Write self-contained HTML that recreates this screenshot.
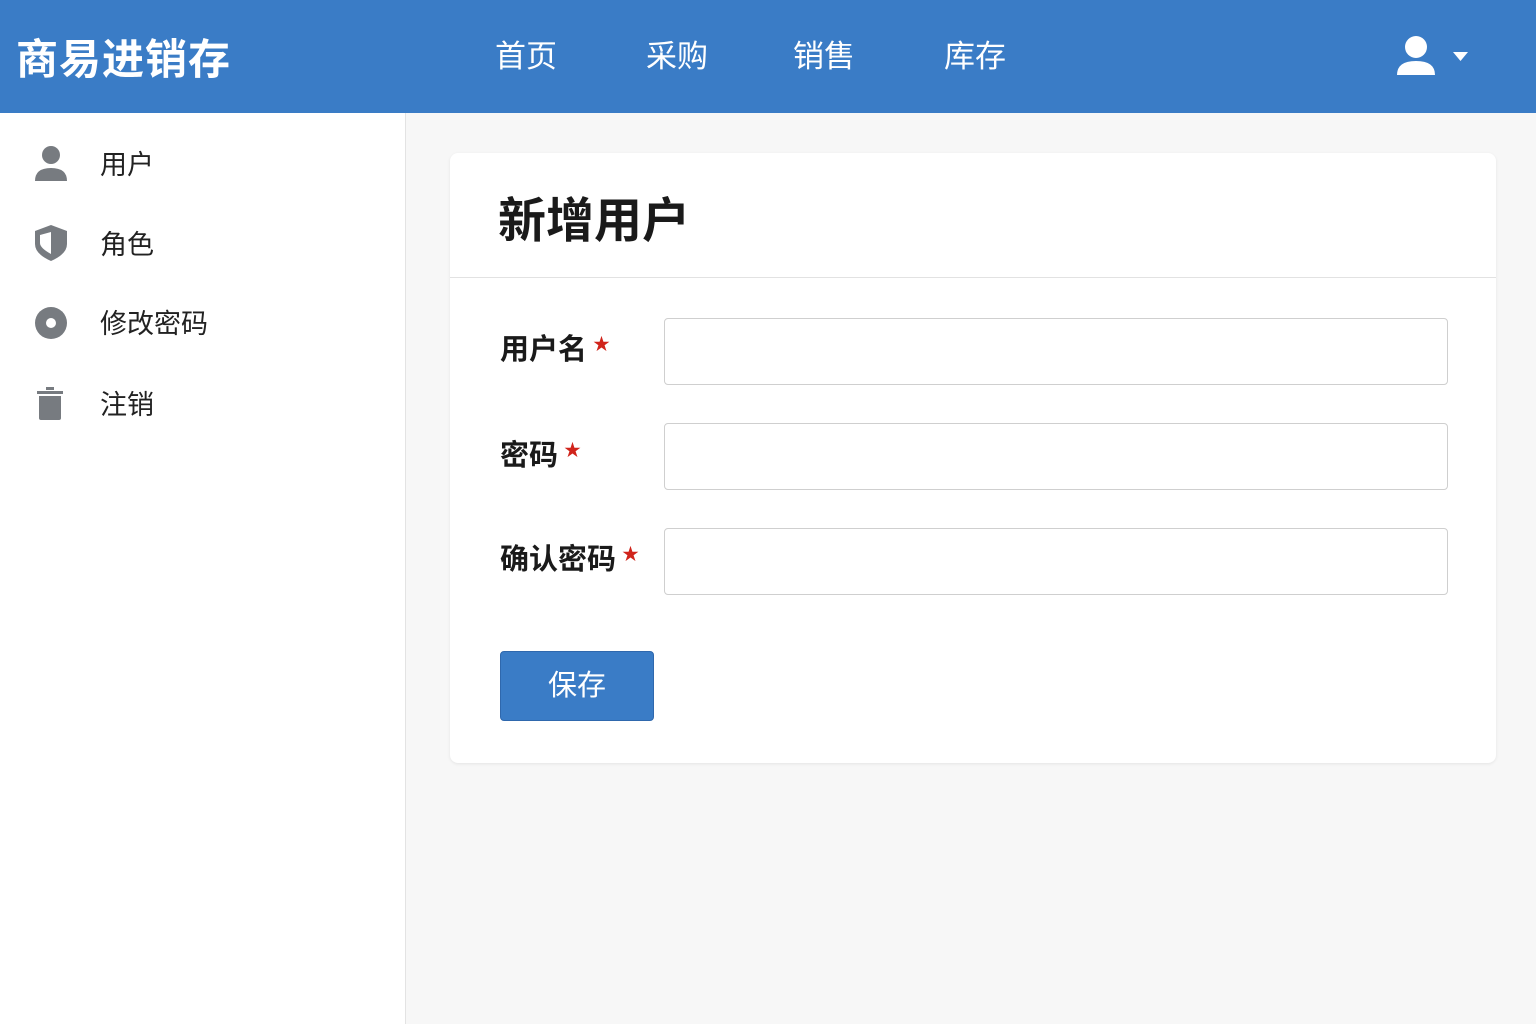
<!DOCTYPE html>
<html><head><meta charset="utf-8"><style>
*{margin:0;padding:0;box-sizing:border-box}
body{width:1536px;height:1024px;background:#f7f7f7;font-family:"Liberation Sans","Noto Sans CJK SC",sans-serif;position:relative;overflow:hidden;color:#222}
.hdr{position:absolute;left:0;top:0;width:1536px;height:113px;background:#3a7cc6;color:#fff}
.logo{position:absolute;left:16px;top:26px;font-size:42px;font-weight:bold;letter-spacing:1px}
.nav{position:absolute;top:31px;font-size:31px}
.side{position:absolute;left:0;top:113px;width:406px;height:911px;background:#fff;border-right:1px solid #e3e3e3}
.item{position:absolute;left:100px;font-size:27px;color:#222}
.ic{position:absolute;left:34px}
.card{position:absolute;left:450px;top:153px;width:1046px;height:610px;background:#fff;border-radius:8px;box-shadow:0 1px 3px rgba(0,0,0,.08)}
.title{position:absolute;left:48px;top:28px;font-size:48px;font-weight:bold;color:#1a1a1a}
.hr{position:absolute;left:0;top:124px;width:100%;height:1px;background:#e2e2e2}
.lbl{position:absolute;left:50px;font-size:29px;font-weight:bold;color:#1a1a1a}
.lbl span{color:#d0241b;font-size:17px;vertical-align:top;margin-left:6px;position:relative;top:4px}
.inp{position:absolute;left:214px;width:784px;height:67px;border:1px solid #cfcfcf;border-radius:4px}
.btn{position:absolute;left:50px;top:498px;width:154px;height:70px;background:#3a7cc6;border:1px solid #2f68ad;border-radius:4px;color:#fff;font-size:29px;text-align:center;line-height:68px}
</style></head><body>
<div class="hdr">
<div class="logo">商易进销存</div>
<div class="nav" style="left:495px">首页</div>
<div class="nav" style="left:646px">采购</div>
<div class="nav" style="left:793px">销售</div>
<div class="nav" style="left:944px">库存</div>
<svg style="position:absolute;left:1396px;top:35px" width="80" height="42" viewBox="0 0 80 42"><circle cx="20" cy="12" r="11" fill="#fff"/><path d="M1 40 Q1 26 20 26 Q39 26 39 40 Z" fill="#fff"/><path d="M57 17 L72 17 L64.5 26 Z" fill="#fff"/></svg>
</div>
<div class="side">
<svg class="ic" style="top:32px" width="36" height="38" viewBox="0 0 36 38"><circle cx="17" cy="10" r="9" fill="#777b80"/><path d="M1 36 Q1 23 17 23 Q33 23 33 36 Z" fill="#777b80"/></svg>
<div class="item" style="top:30px">用户</div>
<svg class="ic" style="top:111px" width="36" height="38" viewBox="0 0 36 38"><path d="M17 1 L33 7 L33 20 Q33 30 17 37 Q1 30 1 20 L1 7 Z" fill="#777b80"/><path d="M6 11 L17 8 L17 30 Q6 24 6 19 Z" fill="#fff"/></svg>
<div class="item" style="top:110px">角色</div>
<svg class="ic" style="top:192px" width="36" height="36" viewBox="0 0 36 36"><circle cx="17" cy="18" r="16" fill="#777b80"/><circle cx="17" cy="18" r="5" fill="#fff"/></svg>
<div class="item" style="top:189px">修改密码</div>
<svg class="ic" style="top:273px" width="36" height="36" viewBox="0 0 36 36"><rect x="3" y="5" width="26" height="3" fill="#777b80"/><rect x="12" y="1" width="8" height="3" fill="#777b80"/><path d="M5 10 H27 V32 Q27 34 25 34 H7 Q5 34 5 32 Z" fill="#777b80"/></svg>
<div class="item" style="top:270px">注销</div>
</div>
<div class="card">
<div class="title">新增用户</div>
<div class="hr"></div>
<div class="lbl" style="top:173px">用户名<span>★</span></div>
<div class="inp" style="top:165px"></div>
<div class="lbl" style="top:279px">密码<span>★</span></div>
<div class="inp" style="top:270px"></div>
<div class="lbl" style="top:383px">确认密码<span>★</span></div>
<div class="inp" style="top:375px"></div>
<div class="btn">保存</div>
</div>
</body></html>
